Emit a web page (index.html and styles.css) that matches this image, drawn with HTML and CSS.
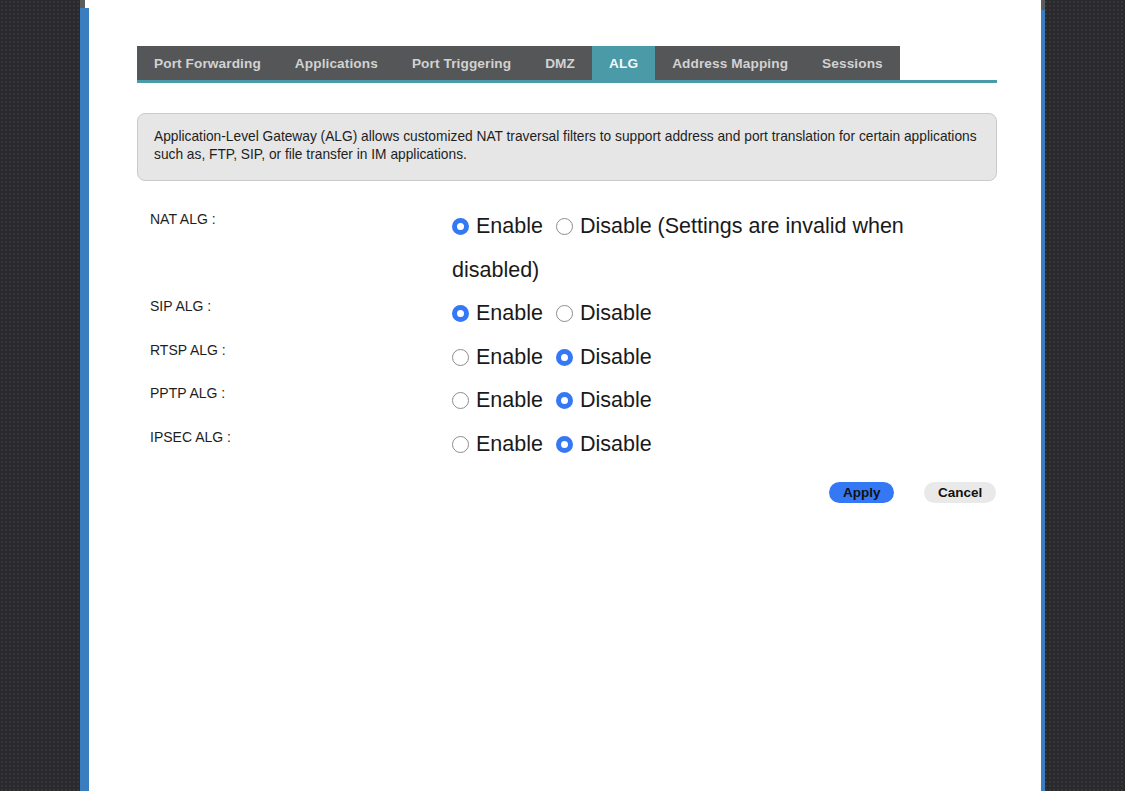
FILE: index.html
```html
<!DOCTYPE html>
<html lang="en">
<head>
<meta charset="utf-8">
<title>ALG</title>
<link rel="stylesheet" href="styles.css">
</head>
<body>
<div class="gutter"></div>
<div class="edge-left"></div>
<main class="panel">
  <nav class="tabs">
    <div class="tabbar">
      <a class="tab">Port Forwarding</a>
      <a class="tab">Applications</a>
      <a class="tab">Port Triggering</a>
      <a class="tab">DMZ</a>
      <a class="tab active">ALG</a>
      <a class="tab">Address Mapping</a>
      <a class="tab">Sessions</a>
    </div>
  </nav>
  <div class="info">Application-Level Gateway (ALG) allows customized NAT traversal filters to support address and port translation for certain applications<br>such as, FTP, SIP, or file transfer in IM applications.</div>
  <form class="form">
    <div class="label">NAT ALG :</div>
    <div class="field">
      <label class="opt"><input type="radio" name="nat" checked><span>Enable</span></label>
      <label class="opt"><input type="radio" name="nat"><span>Disable (Settings are invalid when disabled)</span></label>
    </div>
    <div class="label">SIP ALG :</div>
    <div class="field">
      <label class="opt"><input type="radio" name="sip" checked><span>Enable</span></label>
      <label class="opt"><input type="radio" name="sip"><span>Disable</span></label>
    </div>
    <div class="label">RTSP ALG :</div>
    <div class="field">
      <label class="opt"><input type="radio" name="rtsp"><span>Enable</span></label>
      <label class="opt"><input type="radio" name="rtsp" checked><span>Disable</span></label>
    </div>
    <div class="label">PPTP ALG :</div>
    <div class="field">
      <label class="opt"><input type="radio" name="pptp"><span>Enable</span></label>
      <label class="opt"><input type="radio" name="pptp" checked><span>Disable</span></label>
    </div>
    <div class="label">IPSEC ALG :</div>
    <div class="field">
      <label class="opt"><input type="radio" name="ipsec"><span>Enable</span></label>
      <label class="opt"><input type="radio" name="ipsec" checked><span>Disable</span></label>
    </div>
  </form>
  <div class="actions">
    <button class="btn primary" type="button">Apply</button>
    <button class="btn secondary" type="button">Cancel</button>
  </div>
</main>
<div class="edge-right"></div>
<div class="gutter fill"></div>
</body>
</html>
```

FILE: styles.css
```css
html, body {
  margin: 0;
  padding: 0;
  height: 100%;
}
body {
  display: flex;
  min-height: 791px;
  overflow: hidden;
  background-color: #2a2a2d;
  background-image: radial-gradient(#36363a 0.9px, transparent 1.1px);
  background-size: 4px 4px;
  font-family: "Liberation Sans", Arial, Helvetica, sans-serif;
  color: #1c1c1c;
}
.gutter {
  width: 80px;
  flex: none;
}
.gutter.fill {
  flex: 1;
}
.edge-left {
  width: 9px;
  flex: none;
  background: linear-gradient(to right, #5c5c5c 5px, #ffffff 5px) top left / 100% 8px no-repeat, #3b7ec0;
}
.edge-right {
  width: 4px;
  flex: none;
  background: linear-gradient(#5c5c5c, #5c5c5c) top left / 100% 10px no-repeat, #3b7ec0;
}
.panel {
  width: 952px;
  flex: none;
  background: #ffffff;
  box-sizing: border-box;
  padding: 46px 44px 0 48px;
}
.tabs {
  border-bottom: 3px solid #4b9aa8;
  display: flex;
}
.tabbar {
  display: flex;
  background: #545657;
  height: 34px;
}
.tab {
  display: flex;
  align-items: center;
  padding: 0 17px;
  font-size: 13.65px;
  font-weight: bold;
  color: #d2d2d2;
  white-space: nowrap;
  letter-spacing: 0.1px;
}
.tab.active {
  background: #4b9aa8;
  color: #f4f8f9;
}
.info {
  margin-top: 30px;
  background: #e6e6e6;
  border: 1px solid #cacaca;
  border-radius: 8px;
  padding: 14px 16px 16px 16px;
  font-size: 13.75px;
  line-height: 18px;
  color: #1e1e1e;
  white-space: nowrap;
}
.form {
  display: grid;
  grid-template-columns: 302px 1fr;
  margin-top: 24px;
  padding-left: 13px;
}
.label {
  font-size: 14px;
  line-height: 16px;
  padding-top: 6px;
  color: #1e1e1e;
}
.field {
  font-size: 21.5px;
  line-height: 43.6px;
  color: #1a1a1a;
}
.opt {
  margin-right: 7px;
}
.opt input {
  appearance: none;
  -webkit-appearance: none;
  width: 17px;
  height: 17px;
  margin: 0 7px 0 0;
  border-radius: 50%;
  border: 1.5px solid #8d8d8d;
  background: #ffffff;
  box-sizing: border-box;
  vertical-align: -2px;
}
.opt input:checked {
  border: 5.5px solid #3478f6;
  background: #ffffff;
}
.actions {
  display: flex;
  justify-content: flex-end;
  gap: 30px;
  margin-top: 15px;
  padding-right: 1px;
}
.btn {
  height: 21px;
  border: none;
  border-radius: 11px;
  font-family: "Liberation Sans", Arial, sans-serif;
  font-size: 13.5px;
  font-weight: bold;
  color: #111111;
  padding: 0 14px;
}
.btn.primary {
  background: #3478f6;
  width: 65px;
}
.btn.secondary {
  background: #e9e9e9;
  width: 72px;
}
```
